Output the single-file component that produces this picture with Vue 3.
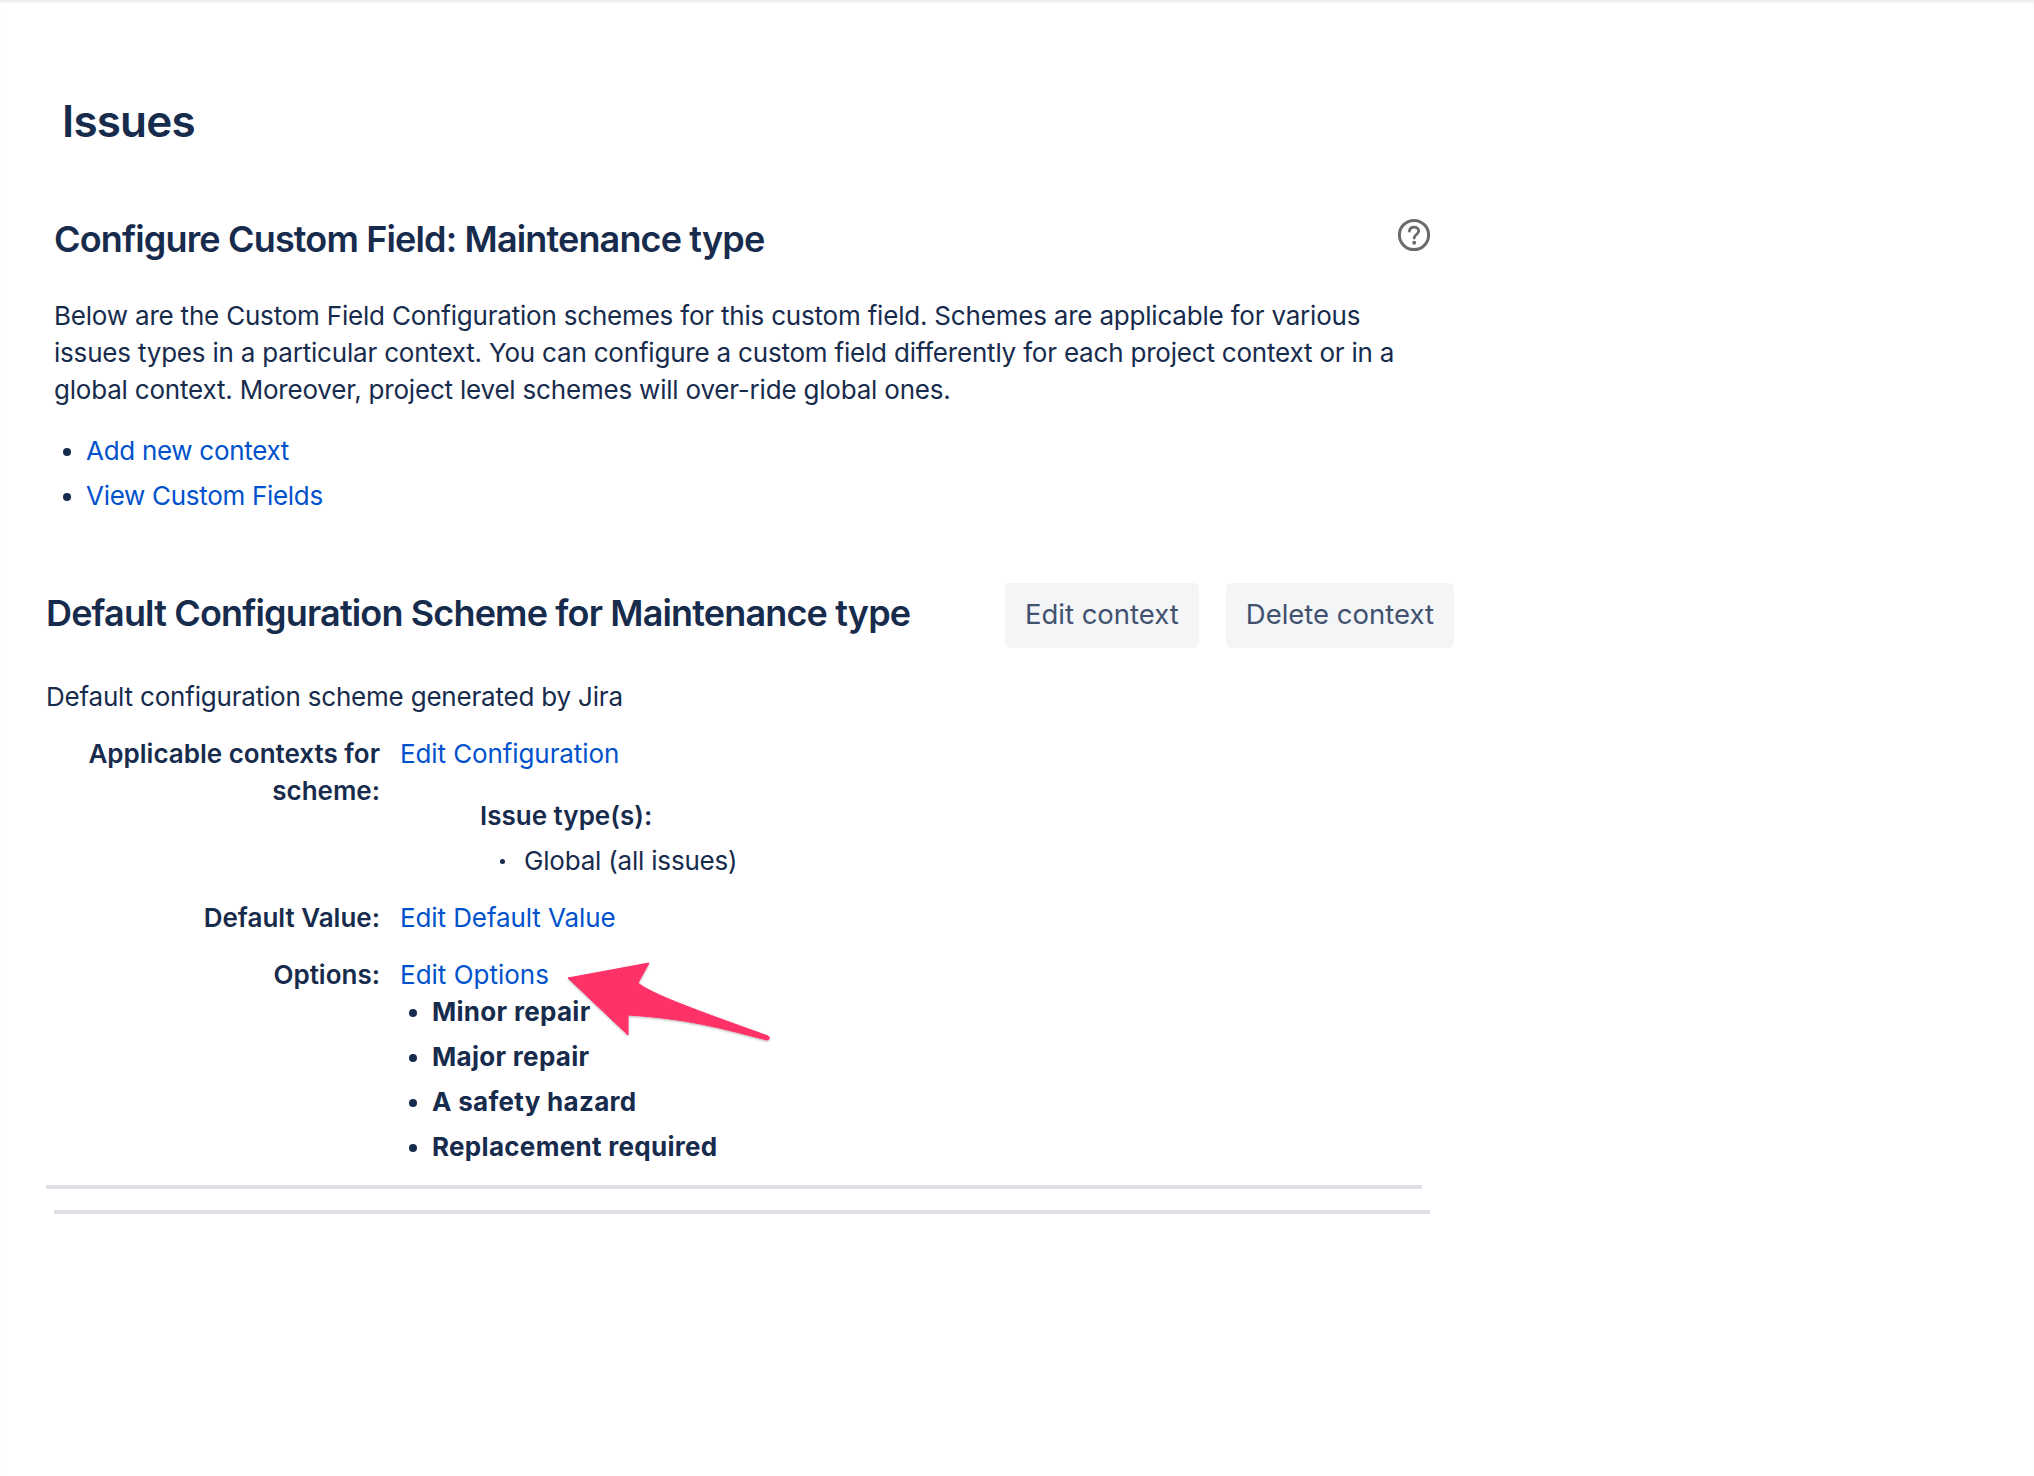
<template>
  <div class="page">
    <h1 class="title">Issues</h1>
    <section class="intro">
      <div class="intro-head">
        <h2>Configure Custom Field: Maintenance type</h2>
        <svg class="help" viewBox="0 0 34 34" width="34" height="34" aria-hidden="true">
          <circle cx="17" cy="17" r="14.600" fill="none" stroke="#6b6b6b" stroke-width="3" />
          <path d="M12.400 13.200c.3-2.600 2.200-4 4.700-4 2.700 0 4.600 1.600 4.600 3.900 0 3.300-4.500 3.500-4.500 7" fill="none" stroke="#6b6b6b" stroke-width="2.800" stroke-linecap="round" />
          <circle cx="17.200" cy="24.800" r="2" fill="#6b6b6b" />
        </svg>
      </div>
      <p class="lead">Below are the Custom Field Configuration schemes for this custom field. Schemes are applicable for various issues types in a particular context. You can configure a custom field differently for each project context or in a global context. Moreover, project level schemes will over-ride global ones.</p>
      <ul class="links">
        <li><a>Add new context</a></li>
        <li><a>View Custom Fields</a></li>
      </ul>
    </section>
    <section class="scheme">
      <div class="scheme-head">
        <h2>Default Configuration Scheme for Maintenance type</h2>
        <div class="actions">
          <button>Edit context</button>
          <button>Delete context</button>
        </div>
      </div>
      <p class="desc">Default configuration scheme generated by Jira</p>
      <div class="row first">
        <div class="label">Applicable contexts for scheme:</div>
        <div class="value">
          <a>Edit Configuration</a>
          <div class="types">
            <strong>Issue type(s):</strong>
            <ul><li>Global (all issues)</li></ul>
          </div>
        </div>
      </div>
      <div class="row default">
        <div class="label">Default Value:</div>
        <div class="value"><a>Edit Default Value</a></div>
      </div>
      <div class="row options">
        <div class="label">Options:</div>
        <div class="value">
          <a>Edit Options</a>
          <ul class="opts">
            <li v-for="o in options" :key="o">{{ o }}</li>
          </ul>
        </div>
      </div>
      <hr class="rule one" />
    </section>
    <hr class="rule two" />
    <svg class="arrow" viewBox="0 0 230 100" width="230" height="100" aria-hidden="true">
      <defs>
        <filter id="s" x="-10%" y="-10%" width="120%" height="130%">
          <feDropShadow dx="0" dy="1" stdDeviation="1" flood-color="#000" flood-opacity=".3" />
        </filter>
      </defs>
      <path filter="url(#s)" fill="#ff3068" stroke="#ff3068" stroke-width="1" stroke-linejoin="round" d="M8 28 89 13 78 33C92 44 130 58 208 86Q211 89 207 90C160 78 130 69 68 65L68 85Z" />
    </svg>
  </div>
</template>

<script setup>
const options = ['Minor repair', 'Major repair', 'A safety hazard', 'Replacement required']
</script>

<style>
html, body { margin: 0; background: #fff; }
</style>

<style scoped>
.page {
  position: relative;
  height: 1476px;
  box-sizing: border-box;
  padding-top: 93px;
  font-family: Inter, "Liberation Sans", sans-serif;
  font-size: 26px;
  line-height: 37px;
  letter-spacing: -0.2px;
  color: #172b4d;
  box-shadow: inset 0 3px 3px -1px #ececec;
}
.title {
  margin: 0 0 0 62px;
  font-size: 44px;
  line-height: 56px;
  font-weight: 600;
  letter-spacing: -0.8px;
}
h2 {
  margin: 0;
  font-size: 36px;
  line-height: 46px;
  font-weight: 600;
  letter-spacing: -0.85px;
}
.intro { width: 1376px; margin: 67px 0 0 54px; }
.intro-head { display: flex; justify-content: space-between; align-items: flex-start; }
.help { margin: 2px -1px 0 0; }
.lead { margin: 35px 0 0; }
.links { margin: 24px 0 0; padding: 0 0 0 32px; letter-spacing: -0.3px; }
.links li + li { margin-top: 8px; }
a { color: #0052cc; }
.scheme { width: 1376px; margin: 66.500px 0 0 46px; }
.scheme-head { display: flex; align-items: center; }
.actions { display: flex; gap: 27px; margin-left: auto; margin-right: -32px; transform: translateY(2px); }
button {
  height: 65px;
  padding: 0 20px 2px;
  border: 0;
  border-radius: 5px;
  background: #f4f5f7;
  color: #42526e;
  font: inherit;
  font-size: 27.500px;
  letter-spacing: 0;
}
.desc { margin: 32px 0 0; }
.row { display: flex; gap: 20px; }
.first { margin-top: 20px; }
.first .value a { letter-spacing: -0.1px; }
.default, .options { margin-top: 20px; }
.default .value a { letter-spacing: -0.1px; }
.options .value a { letter-spacing: 0; }
.label { width: 334px; text-align: right; font-weight: 600; letter-spacing: 0; }
.value { flex: 1; }
.types { margin: 25px 0 0 80px; font-weight: 400; }
.types strong { font-weight: 600; display: block; letter-spacing: 0; }
.types ul { margin: 8px 0 0; padding-left: 44px; list-style: none; position: relative; }
.types li::before {
  content: "";
  position: absolute;
  left: 20px;
  top: 17px;
  width: 5px;
  height: 5px;
  border-radius: 50%;
  background: #172b4d;
}
.opts { margin: 0; padding: 0 0 0 32px; font-weight: 700; letter-spacing: 0.3px; }
.opts li + li { margin-top: 8.200px; }
.rule { height: 4px; border: 0; margin: 0; background: #dfe1e6; }
.one { margin-top: 20px; }
.two { width: 1376px; margin: 21px 0 0 54px; }
.arrow { position: absolute; left: 560px; top: 950px; }
</style>
